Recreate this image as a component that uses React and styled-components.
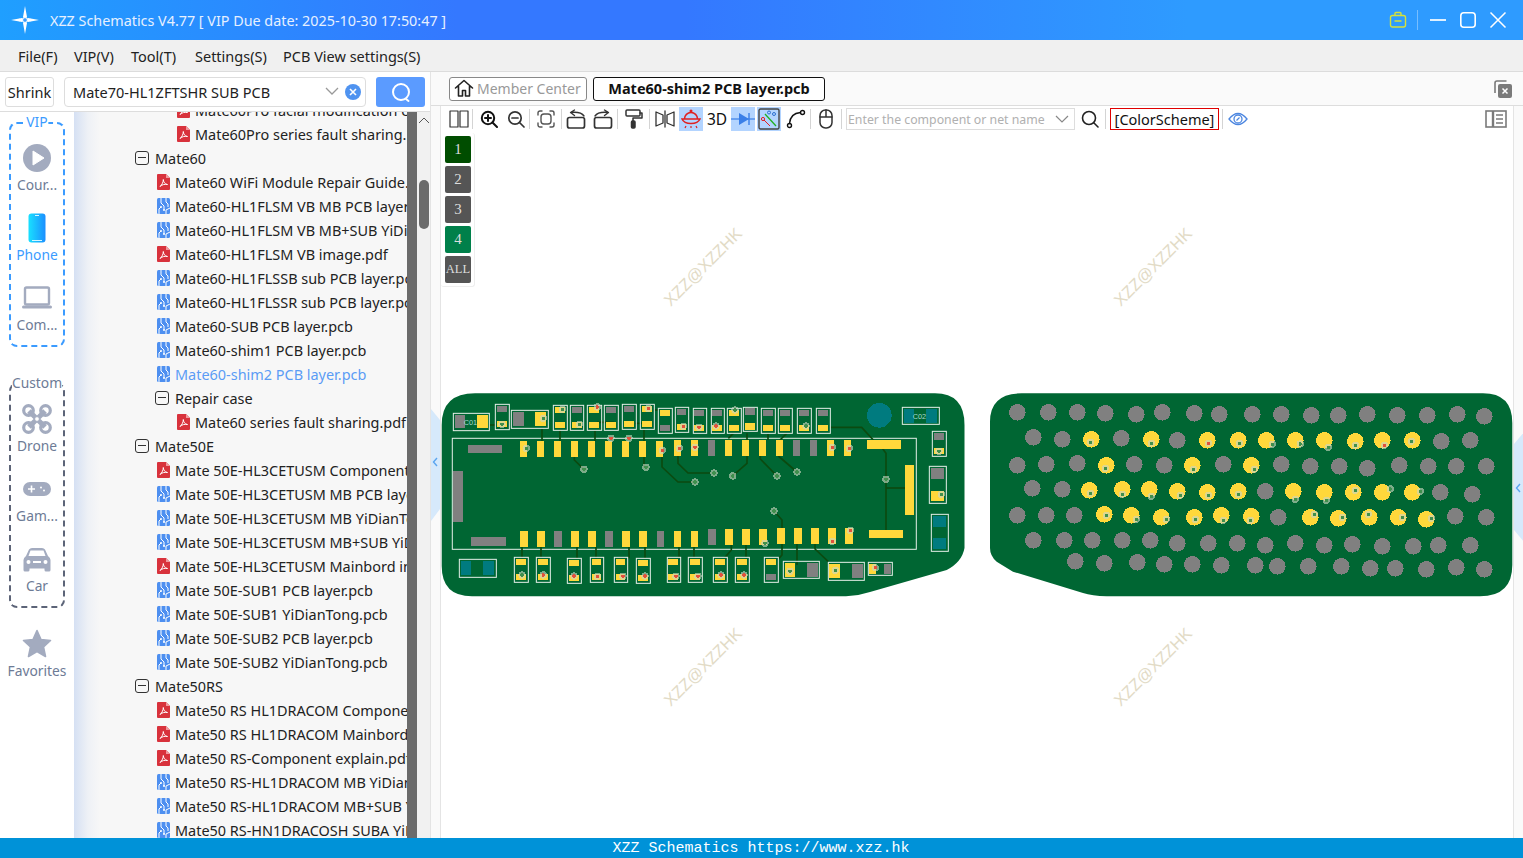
import React from 'react';
import styled, { createGlobalStyle } from 'styled-components';

const FONT = '"Noto Sans", "Open Sans", Arial, sans-serif';

const Global = createGlobalStyle`
  html, body { margin: 0; padding: 0; height: 100%; overflow: hidden; background: #fff; }
  * { box-sizing: border-box; }
  #root { height: 100%; }
`;

const Page = styled.div`
  width: 1523px; height: 858px; display: flex; flex-direction: column;
  font-family: ${FONT}; color: #222; overflow: hidden;
`;
const TitleBar = styled.header`
  height: 40px; flex: none; display: flex; align-items: center; padding: 0 10px 0 10px;
  background: linear-gradient(90deg, #1f9fff 0%, #3478ff 30%, #3478ff 45%, #2e9bff 78%, #2e9bff 100%);
`;
const LogoBox = styled.div`width: 30px; height: 30px; margin-right: 10px;`;
const TitleText = styled.div`font-size: 14.35px; color: #e6f0ff; white-space: nowrap;`;
const WinControls = styled.div`margin-left: auto; display: flex; align-items: center;`;
const WinSep = styled.div`width: 1px; height: 20px; background: rgba(255,255,255,.35); margin: 0 5px 0 10px;`;
const WinBtn = styled.div`width: 30px; height: 20px; display: flex; align-items: center; justify-content: center;`;

const MenuBar = styled.nav`
  height: 32px; flex: none; display: flex; align-items: center; gap: 16px; padding: 0 0 0 18px;
  background: #f0f0f0; border-bottom: 1px solid #dcdcdc; font-size: 14.5px; color: #222;
`;
const MenuItem = styled.span`width: ${p => p.$w}px; white-space: nowrap;`;
const Main = styled.div`flex: 1; min-height: 0; display: flex;`;

const LeftPanel = styled.aside`width: 431px; flex: none; display: flex; flex-direction: column; background: #fff; border-right: 1px solid #e4e4e4;`;
const SearchRow = styled.div`height: 40px; flex: none; display: flex; align-items: center; padding: 0 0 0 5px; border-bottom: 1px solid #ddd;`;
const ShrinkBtn = styled.div`width: 49px; height: 30px; border: 1px solid #ddd; border-radius: 3px; display: flex; align-items: center; justify-content: center; font-size: 14.5px; margin-right: 10px;`;
const SelectBox = styled.div`width: 302px; height: 30px; border: 1px solid #ddd; border-radius: 4px; display: flex; align-items: center; padding: 0 4px 0 8px; font-size: 14.5px; margin-right: 10px; color: #222;`;
const SelectText = styled.span`flex: 1;`;
const ClearDot = styled.div`width: 16px; height: 16px; margin-left: 6px; border-radius: 50%; background: #4f93f0; display: flex; align-items: center; justify-content: center;`;
const SearchBtn = styled.div`width: 49px; height: 30px; border-radius: 3px; background: #5b9bff; display: flex; align-items: center; justify-content: center;`;

const LeftBody = styled.div`flex: 1; min-height: 0; display: flex;`;
const Sidebar = styled.div`width: 74px; flex: none; padding: 10px 0 0 9px; background: #fff; display: flex; flex-direction: column;`;
const Group = styled.div`
  position: relative; width: 56px; padding: 19px 0 8px; display: flex; flex-direction: column; gap: 16px; align-items: center;
  border: 2px dashed ${p => p.$color}; border-radius: 8px; margin-bottom: ${p => p.$mb}px;
`;
const GroupLegend = styled.div`
  position: absolute; top: -12px; left: 50%; transform: translateX(-50%); background: #fff; padding: 0 ${p => p.$pad}px;
  font-size: 13.8px; line-height: 20px; color: ${p => p.$color}; white-space: nowrap;
`;
const SideItem = styled.div`display: flex; flex-direction: column; align-items: center; width: 62px; flex: none; margin-left: ${p => p.$ml || 0}px;`;
const SideIcon = styled.div`height: 30px; display: flex; align-items: center; justify-content: center;`;
const SideLabel = styled.div`font-size: 13.8px; line-height: 24px; color: ${p => p.$active ? '#3a9bff' : '#6d7b96'}; white-space: nowrap;`;

const Tree = styled.div`width: 333px; flex: none; overflow: hidden; background: linear-gradient(90deg, #d5e0f3 0, #eef1f6 14px, #f7f7f7 26px);`;
const TreeInner = styled.div`margin-top: -14px;`;
const Row = styled.div`
  height: 24px; display: flex; align-items: center; white-space: nowrap; font-size: 14.45px;
  padding-left: ${p => p.$indent}px; color: ${p => p.$hl ? '#5b9cf5' : '#222'};
`;
const FileIco = styled.span`width: 13px; height: 16px; flex: none; margin-right: 5px; display: flex;`;
const MinusBox = styled.span`
  width: 14px; height: 14px; flex: none; margin-right: 6px; border: 1.2px solid #333; border-radius: 3px; position: relative;
  &::after { content: ''; position: absolute; left: 2px; right: 2px; top: 5px; height: 1.2px; background: #333; }
`;
const DarkStrip = styled.div`width: 10px; flex: none; background: #6b6b6b;`;
const ScrollTrack = styled.div`flex: 1; background: #f1f1f1; display: flex; flex-direction: column; align-items: center; padding-top: 5px;`;
const ScrollThumb = styled.div`width: 10px; height: 49px; border-radius: 5px; background: #6b6b6b; margin-top: 56px;`;

const RightRegion = styled.div`flex: 1; min-width: 0; display: flex; flex-direction: column; background: #fafafa;`;
const TabRow = styled.div`height: 34px; flex: none; display: flex; align-items: center; padding: 0 11px 0 18px; gap: 6px; border-bottom: 1px solid #ddd;`;
const MemberTab = styled.div`height: 24px; width: 138px; border: 1px solid #888; border-radius: 3px; display: flex; align-items: center; padding: 0 0 1px 4px; gap: 3px; font-size: 14px; color: #999; background: #fff; white-space: nowrap;`;
const FileTab = styled.div`height: 24px; width: 232px; border: 1px solid #111; border-radius: 3px; display: flex; align-items: center; justify-content: center; padding-bottom: 1px; font-size: 14.5px; font-weight: 700; color: #111; background: #fff; white-space: nowrap;`;
const TabEnd = styled.div`margin-left: auto; display: flex;`;
const WorkRow = styled.div`flex: 1; min-height: 0; display: flex;`;
const Gutter = styled.div`position: relative; width: 10px; flex: none; background: #fafafa; border-right: 1px solid #e4e4e4;`;
const Handle = styled.svg`position: absolute; left: ${p => p.$left}px; top: ${p => p.$top}px;`;
const Center = styled.div`width: 1072px; flex: none; display: flex; flex-direction: column; background: #fff;`;
const ToolRow = styled.div`height: 26px; flex: none; display: flex; align-items: center; padding: 0 4px 0 5px; background: #fff;`;
const Tool = styled.div`
  width: ${p => p.$w}px; height: 24px; flex: none; display: flex; align-items: center; justify-content: center;
  margin-left: ${p => p.$ml || 0}px; background: ${p => p.$on ? '#b3d4ff' : 'transparent'}; font-size: 15.5px; color: #111;
`;
const ToolSep = styled.div`width: 1px; height: 20px; flex: none; background: #d4d4d4; margin-left: ${p => p.$ml || 0}px;`;
const NetInput = styled.div`
  width: 229px; height: 22px; flex: none; margin-left: 4px; border: 1px solid #ddd; display: flex; align-items: center; justify-content: space-between;
  padding: 0 5px 0 1px; font-size: 12.3px; color: #b0b0b0; white-space: nowrap;
`;
const SchemeBtn = styled.div`width: 109px; height: 22px; flex: none; margin-left: 4px; border: 1px solid #e00000; display: flex; align-items: center; justify-content: center; font-size: 14.5px; color: #111; white-space: nowrap;`;
const ToolEnd = styled.div`margin-left: auto;`;
const Canvas = styled.div`position: relative; flex: 1; min-height: 0; padding-top: 261px; background: #fff; overflow: hidden;`;
const Layers = styled.div`position: absolute; left: 0; top: 1px; width: 34px; padding: 3px 3px 3px 4px; display: flex; flex-direction: column; gap: 3px; border-right: 1px solid #eee; border-bottom: 1px solid #eee; border-radius: 3px; background: #fff;`;
const LayerBtn = styled.div`
  height: 27px; border-radius: 2px; background: ${p => p.$bg}; display: flex; align-items: center; justify-content: center;
  font-family: "Liberation Serif", serif; font-size: ${p => p.$fs}px; color: #ddd; overflow: hidden; white-space: nowrap;
`;
const Watermark = styled.div`
  position: absolute; left: ${p => p.$x}px; top: ${p => p.$y}px; transform: translate(-50%, -50%) rotate(-45deg);
  font-family: "Liberation Sans", sans-serif; font-size: 16.5px; color: #e2dbc6; white-space: nowrap;
`;
const Board = styled.svg`display: block;`;
const RightStrip = styled.div`position: relative; flex: 1; background: #fafafa; border-left: 1px solid #e4e4e4;`;
const StatusBar = styled.footer`
  height: 20px; flex: none; background: #0092d8; color: #fff; display: flex; align-items: center; justify-content: center;
  font-family: "Liberation Mono", monospace; font-size: 15px; padding: 1px 1px 0 0;
`;

const S = { fill: 'none', stroke: '#333', strokeWidth: 1.6, strokeLinecap: 'round', strokeLinejoin: 'round' };

const Logo = () => (
  <svg width="30" height="30" viewBox="0 0 30 30">
    <path d="M15 1 L17 12 L15 15 L13 12Z M15 29 L17 18 L15 15 L13 18Z M1 15 L12 13 L15 15 L12 17Z M29 15 L18 13 L15 15 L18 17Z" fill="#fff" />
    <circle cx="15" cy="15" r="2.4" fill="#3a9dff" stroke="#fff" strokeWidth="1" />
    <circle cx="9.5" cy="15" r="1.2" fill="#fff" /><circle cx="20.5" cy="15" r="1.2" fill="#fff" />
  </svg>
);
const Pdf = () => (
  <svg width="13" height="16" viewBox="0 0 13 16">
    <path d="M1 0 H9 L13 4 V15 a1 1 0 0 1 -1 1 H1 a1 1 0 0 1 -1 -1 V1 a1 1 0 0 1 1 -1Z" fill="#d8323c" />
    <path d="M9 0 L13 4 H9Z" fill="#f09a9f" />
    <path d="M3 12.5 C5 11 6.5 7.5 6.3 5.5 C6.2 7.5 8 10.5 10.5 10.5 C8 10 5 10.5 3 12.5Z" fill="none" stroke="#fff" strokeWidth="1" />
  </svg>
);
const Pcb = () => (
  <svg width="13" height="16" viewBox="0 0 13 16">
    <rect width="13" height="16" rx="1.5" fill="#4d8ff0" />
    <path d="M4 0 V5 L7 8 V12 M9 0 V4 L11 6 V9 M2 16 V11 L4 9 M9 16 V12 L13 10" fill="none" stroke="#fff" strokeWidth="1" />
    <circle cx="7" cy="12" r="1" fill="#fff" /><circle cx="4" cy="9" r="1" fill="#fff" />
  </svg>
);

const tree = [
  [2, 'f', 'Mate60Pro facial modification case.pdf'], [2, 'f', 'Mate60Pro series fault sharing.pdf'],
  [0, 'g', 'Mate60'],
  [1, 'f', 'Mate60 WiFi Module Repair Guide.pdf'], [1, 'p', 'Mate60-HL1FLSM VB MB PCB layer.pcb'], [1, 'p', 'Mate60-HL1FLSM VB MB+SUB YiDianTong.pcb'],
  [1, 'f', 'Mate60-HL1FLSM VB image.pdf'], [1, 'p', 'Mate60-HL1FLSSB sub PCB layer.pcb'], [1, 'p', 'Mate60-HL1FLSSR sub PCB layer.pcb'],
  [1, 'p', 'Mate60-SUB PCB layer.pcb'], [1, 'p', 'Mate60-shim1 PCB layer.pcb'], [1, 'p', 'Mate60-shim2 PCB layer.pcb', true],
  [1, 'g', 'Repair case'], [2, 'f', 'Mate60 series fault sharing.pdf'],
  [0, 'g', 'Mate50E'],
  [1, 'f', 'Mate 50E-HL3CETUSM Component explain.pdf'], [1, 'p', 'Mate 50E-HL3CETUSM MB PCB layer.pcb'], [1, 'p', 'Mate 50E-HL3CETUSM MB YiDianTong.pcb'],
  [1, 'p', 'Mate 50E-HL3CETUSM MB+SUB YiDianTong.pcb'], [1, 'f', 'Mate 50E-HL3CETUSM Mainbord image.pdf'],
  [1, 'p', 'Mate 50E-SUB1 PCB layer.pcb'], [1, 'p', 'Mate 50E-SUB1 YiDianTong.pcb'], [1, 'p', 'Mate 50E-SUB2 PCB layer.pcb'], [1, 'p', 'Mate 50E-SUB2 YiDianTong.pcb'],
  [0, 'g', 'Mate50RS'],
  [1, 'f', 'Mate50 RS HL1DRACOM Component explain.pdf'], [1, 'f', 'Mate50 RS HL1DRACOM Mainbord image.pdf'], [1, 'f', 'Mate50 RS-Component explain.pdf'],
  [1, 'p', 'Mate50 RS-HL1DRACOM MB YiDianTong.pcb'], [1, 'p', 'Mate50 RS-HL1DRACOM MB+SUB YiDianTong.pcb'], [1, 'p', 'Mate50 RS-HN1DRACOSH SUBA YiDianTong.pcb'],
  [1, 'p', 'Mate50 RS-HN1DRACOSH SUBB YiDianTong.pcb'],
];
const groupIndent = [61, 81, 103];
const fileIndent = [61, 83, 103];

const GREEN = '#006633', YEL = '#ffd83b', GRAY = '#808080', TEAL = '#007b7f', TRACE = '#0b4a10', SILK = '#e6f0ea';

const partsA = {
  outlines: [[70,85,178,137],[196,58,238,134],[244,76,355,130],[370,61,412,136],[421,61,461,136],[472,61,515,136],[523,61,565,136],[577,58,619,133],[631,58,673,133],[685,70,727,145],[736,67,776,142],[790,70,830,145],[88,523,199,577],[253,517,295,592],[319,517,361,592],[412,520,454,595],[481,517,521,592],[553,517,593,592],[619,520,661,595],[712,517,752,592],[775,517,817,592]],
  yellow: [[141,90,33,38],[201,108,30,18],[315,81,33,42],[375,66,30,18],[375,111,30,18],[426,111,30,18],[477,66,30,18],[477,111,30,18],[528,111,30,18],[582,108,30,18],[636,63,30,18],[636,108,30,18],[690,75,30,18],[741,117,28,18],[793,120,28,18],
    [270,168,21,48],[321,168,21,48],[372,168,21,48],[423,168,21,48],[474,168,21,48],[525,168,21,48],[576,168,21,48],[627,168,21,48],[678,168,21,48],[732,165,21,48],[783,165,21,48],
    [270,438,24,48],[321,438,24,48],[423,438,24,48],[474,438,24,48],[576,438,24,48],[627,438,24,48],[732,438,21,48],[783,438,21,48],
    [258,522,30,18],[258,567,30,18],[324,522,30,18],[324,567,30,18],[417,525,30,18],[417,570,30,18],[486,522,27,18],[486,567,27,18],[558,522,27,18],[558,567,27,18],[624,525,30,18],[624,570,30,18],[714,522,30,18],[714,567,30,18],[780,522,30,18],[780,567,30,18]],
  gray: [[75,90,30,40],[201,63,30,18],[249,81,33,42],[426,66,30,18],[528,66,30,18],[582,63,30,18],[690,120,30,18],[741,72,28,18],[793,75,28,18],[114,180,102,24],[69,258,30,153],[123,456,105,27],[372,438,24,48],[525,438,24,48],[681,438,21,48]],
  teal: [[93,528,30,42],[159,528,33,42]],
  vias: [[216,118],[340,100],[397,73],[448,118],[502,66,1],[655,70,1],[760,124,1],[807,127,1],[289,190],[543,160,1],[597,160,1],[697,196,1],[748,190,1],[795,187,1],[462,253],[648,247],[795,291],[276,570],[340,570,1],[432,573,1],[502,574,1],[579,574,1],[645,573,1],[738,574,1],[804,574,1]],
  traces: ['336,130 336,168','390,136 390,168','495,136 495,168','642,133 642,168','433,216 433,225 462,253','642,216 642,247','696,216 696,246 744,291 795,291','744,213 744,235 774,264 842,264','178,120 196,120','500,112 552,112','615,115 640,115','673,75 685,75','276,486 276,517','333,486 333,517','441,486 441,520','498,486 498,520','597,486 597,520','645,486 645,520','747,486 747,517','792,486 792,517'],
};
const partsB = {
  outlines: [[34,70,73,145],[82,70,124,145],[130,67,172,139],[184,70,226,145],[235,70,277,145],[292,70,334,145],[349,70,391,145],[607,67,718,118],[697,139,739,214],[688,244,739,355],[694,388,745,499],[40,517,82,592],[106,517,148,592],[193,517,235,592],[250,529,358,580],[385,532,493,586],[505,532,577,571]],
  yellow: [[36,120,30,18],[87,75,30,18],[87,120,30,18],[135,114,30,21],[189,120,30,18],[240,120,30,18],[297,120,30,18],[354,120,30,18],[702,189,30,18],[693,318,39,30],
    [75,165,21,48],[126,165,21,48],[177,165,21,48],[228,165,21,48],[381,165,21,48],[432,165,21,48],[501,165,102,26],[615,240,27,150],[507,435,102,24],
    [75,432,24,48],[126,432,24,48],[177,432,24,48],[231,429,24,48],[282,429,24,48],[333,429,24,48],[384,429,24,48],[435,429,24,48],
    [45,522,30,18],[45,567,30,18],[111,522,30,18],[111,567,30,18],[198,522,30,18],[255,534,30,42],[387,537,33,42],[507,537,21,30]],
  gray: [[36,75,30,18],[135,69,30,21],[189,75,30,18],[240,75,30,18],[297,75,30,18],[354,75,30,18],[702,144,30,21],[693,249,39,33],[24,165,21,48],[279,165,21,48],[330,165,21,48],[24,432,24,48],[198,567,30,18],[321,534,33,42],[456,537,33,42],[552,537,21,30]],
  teal: [[612,72,30,42],[678,72,33,42],[699,393,39,33],[699,459,39,33]],
  vias: [[48,123,1],[105,75],[318,123],[717,199],[724,328],[397,187,1],[448,190,1],[42,264],[98,273],[231,273],[291,261],[558,283],[222,378],[195,475],[397,469,1],[451,436,1],[63,570,1],[132,570,1],[270,559],[406,556],[526,548,1]],
  traces: ['141,145 141,165','204,145 204,165','260,145 240,165','100,145 85,160','141,213 141,235 98,273','181,213 181,222 231,273','235,213 291,261','392,127 485,127 520,165','548,191 558,205 558,435','558,309 615,309','222,378 246,405 246,432','94,480 94,495 75,517','138,480 138,517','246,477 246,510 237,520','291,477 291,540','345,477 345,492 385,530'],
};
// circles: [x, y, viaX, viaY, red]
const ballsC = [
  [112,82],[205,82],[292,82],[376,85],[469,88],[547,82],[643,85],[718,88],[817,88],
  [160,157],[247,163],[334,163,332,172],[424,160],[514,163,514,175],[592,166],[682,166,685,175,1],[775,166,778,175],
  [112,241],[199,238],[292,235],[379,241,376,250],[463,238],[553,241],[637,241,640,253],[730,238],[814,241,823,253],
  [157,310],[247,313],[328,316,331,325],[427,313,427,328],[508,313,514,334],[592,319,601,331],[682,322,685,331],[775,319,775,328],
  [112,391],[199,391],[283,391],[373,388,379,391],[454,391,469,403],[544,397,559,403],[643,397,646,403],[724,391,730,406],[814,394,811,406],
  [160,466],[253,466],[337,466],[427,466],[511,466],[592,475],[685,475],[772,475],
  [286,529],[373,535],[472,532],[553,538],[637,538],[724,541],[826,541],
];
const ballsD = [
  [94,88],[184,91],[265,91],[352,88],[442,91],[532,91],[622,88],[703,94],
  [49,166,67,178],[136,166,151,177],[223,166,235,187],[316,169,316,181],[397,166,403,181,1],[487,166,484,169],[574,169],[661,166],
  [94,238],[181,244],[268,244],[352,250],[448,241],[535,244],[619,244],[709,244],
  [46,319],[130,319,136,343],[223,322,229,346],[310,322,316,316],[397,322,421,312],[487,322,511,319],[571,322],[667,328],
  [85,397],[181,397,193,388],[265,400,277,397],[358,397,355,388],[445,397,457,397],[529,403,544,400],[616,394],[709,397],
  [46,481],[136,475],[223,481],[307,478],[397,484],[490,484],[565,481],[661,481],
  [82,544],[175,544],[274,544],[361,550],[436,550],[529,553],[619,547],[703,553],
];

const Via = ({ x, y, red }) => (
  <g shapeRendering="crispEdges">
    <circle cx={x} cy={y} r="11" fill="#c9d6c0" fillOpacity=".62" />
    <circle cx={x} cy={y} r="5.5" fill={red ? '#e2503c' : '#3f8f4d'} />
  </g>
);
const Rects = ({ list, fill }) => list.map((r, i) => <rect key={i} x={r[0]} y={r[1]} width={r[2]} height={r[3]} fill={fill} shapeRendering="crispEdges" />);
const Parts = ({ ox, data, children }) => (
  <g transform={`translate(${ox} 385) scale(0.33333)`}>
    {data.traces.map((t, i) => <polyline key={i} points={t} fill="none" stroke={TRACE} strokeWidth="5" />)}
    <Rects list={data.yellow} fill={YEL} />
    <Rects list={data.gray} fill={GRAY} />
    <Rects list={data.teal} fill={TEAL} />
    {data.outlines.map((o, i) => <rect key={i} x={o[0]} y={o[1]} width={o[2] - o[0]} height={o[3] - o[1]} fill="none" stroke={SILK} strokeWidth="3" />)}
    {children}
    {data.vias.map((v, i) => <Via key={i} x={v[0]} y={v[1]} red={v[2]} />)}
  </g>
);
const Balls = ({ ox, list }) => (
  <g transform={`translate(${ox} 385) scale(0.33333)`}>
    {list.map((b, i) => <circle key={i} cx={b[0]} cy={b[1]} r="25" fill={b[2] !== undefined ? YEL : GRAY} shapeRendering="crispEdges" />)}
    {list.filter(b => b[2] !== undefined).map((b, i) => <Via key={i} x={b[2]} y={b[3]} red={b[4]} />)}
  </g>
);

const PcbDrawing = () => (
  <Board width="1072" height="205" viewBox="441 393 1072 205">
    <path d="M475 393.3 H935 Q964.5 393.3 964.5 425 V548 Q962 562 946.7 570 L870 592 Q858 596 846 596.3 H472 Q441.7 596.3 441.7 566 V425 Q441.7 393.3 475 393.3Z" fill={GREEN} />
    <path d="M1021.7 393.3 H1483 Q1512.3 393.3 1512.3 423 V565 Q1512.3 596.3 1480 596.3 H1106.7 Q1092 596 1083 593 L1013 571.7 L996.7 561.7 Q990 556 990 548 V421.7 Q990 393.3 1021.7 393.3Z" fill={GREEN} />
    <rect x="452.3" y="438.3" width="464" height="111" fill="none" stroke={SILK} strokeWidth="1" />
    <Parts ox={430} data={partsA}>
      <text x="101" y="119" fontFamily="Liberation Sans" fontSize="22" fill="#a7d8d0">C01</text>
    </Parts>
    <Parts ox={700} data={partsB}>
      <circle cx="538" cy="91" r="37" fill={TEAL} shapeRendering="crispEdges" />
      <text x="638" y="101" fontFamily="Liberation Sans" fontSize="22" fill="#a7d8d0">C02</text>
    </Parts>
    <Balls ox={980} list={ballsC} />
    <Balls ox={1250} list={ballsD} />
  </Board>
);

const Chevron = ({ color = '#5aa5f0' }) => <path d="M6 -4 L2.5 0 L6 4" fill="none" stroke={color} strokeWidth="1.4" />;

const marks = [[262, 135], [712, 135], [262, 535], [712, 535]];

export default function App() {
  return (
    <Page>
      <Global />
      <TitleBar>
        <LogoBox><Logo /></LogoBox>
        <TitleText>XZZ Schematics V4.77 [ VIP Due date: 2025-10-30 17:50:47 ]</TitleText>
        <WinControls>
          <svg width="18" height="18" viewBox="0 0 18 18" fill="none" stroke="#d6e13a" strokeWidth="1.4">
            <rect x="1.5" y="4.5" width="15" height="11.5" rx="2" />
            <path d="M6 4.5 V2.5 a1 1 0 0 1 1 -1 h4 a1 1 0 0 1 1 1 v2 M5.5 10 h7" />
          </svg>
          <WinSep />
          <WinBtn><svg width="18" height="18" viewBox="0 0 18 18"><path d="M1 9 H17" stroke="#fff" strokeWidth="1.7" /></svg></WinBtn>
          <WinBtn><svg width="18" height="18" viewBox="0 0 18 18"><rect x="1.8" y="1.8" width="14.4" height="14.4" rx="3" fill="none" stroke="#fff" strokeWidth="1.6" /></svg></WinBtn>
          <WinBtn><svg width="18" height="18" viewBox="0 0 18 18"><path d="M1.5 1.5 L16.5 16.5 M16.5 1.5 L1.5 16.5" stroke="#fff" strokeWidth="1.5" /></svg></WinBtn>
        </WinControls>
      </TitleBar>
      <MenuBar>
        <MenuItem $w={40}>File(F)</MenuItem>
        <MenuItem $w={41}>VIP(V)</MenuItem>
        <MenuItem $w={48}>Tool(T)</MenuItem>
        <MenuItem $w={72}>Settings(S)</MenuItem>
        <MenuItem $w={137}>PCB View settings(S)</MenuItem>
      </MenuBar>
      <Main>
        <LeftPanel>
          <SearchRow>
            <ShrinkBtn>Shrink</ShrinkBtn>
            <SelectBox>
              <SelectText>Mate70-HL1ZFTSHR SUB PCB</SelectText>
              <svg width="14" height="9" viewBox="0 0 14 9"><path d="M1 1 L7 7 L13 1" fill="none" stroke="#999" strokeWidth="1.3" /></svg>
              <ClearDot><svg width="8" height="8" viewBox="0 0 8 8"><path d="M1 1 L7 7 M7 1 L1 7" stroke="#fff" strokeWidth="1.6" /></svg></ClearDot>
            </SelectBox>
            <SearchBtn>
              <svg width="22" height="22" viewBox="0 0 22 22" fill="none" stroke="#fff" strokeWidth="2"><circle cx="11" cy="11" r="8" /><path d="M16 18 L18.5 20" strokeLinecap="round" /></svg>
            </SearchBtn>
          </SearchRow>
          <LeftBody>
            <Sidebar>
              <Group $color="#3b9bff" $mb={36}>
                <GroupLegend $color="#3b9bff" $pad={1}>VIP</GroupLegend>
                <SideItem>
                  <SideIcon><svg width="30" height="30" viewBox="0 0 30 30"><circle cx="15" cy="15" r="14" fill="#a3abbf" /><path d="M11 8 L22 15 L11 22Z" fill="#fff" strokeLinejoin="round" stroke="#fff" /></svg></SideIcon>
                  <SideLabel>Cour...</SideLabel>
                </SideItem>
                <SideItem>
                  <SideIcon>
                    <svg width="18" height="30" viewBox="0 0 18 30">
                      <defs><linearGradient id="phoneG" x1="0" x2="1" y1="0" y2="0"><stop offset="0" stopColor="#19e0ff" /><stop offset="1" stopColor="#1b8fff" /></linearGradient></defs>
                      <rect x="0.5" y="0.5" width="17" height="29" rx="3" fill="url(#phoneG)" />
                      <path d="M7 2.5 H11 M4 27.5 H14" stroke="#d8f7ff" strokeWidth="1" />
                    </svg>
                  </SideIcon>
                  <SideLabel $active>Phone</SideLabel>
                </SideItem>
                <SideItem>
                  <SideIcon>
                    <svg width="32" height="24" viewBox="0 0 32 24">
                      <rect x="4" y="1.5" width="24" height="17" rx="1.5" fill="#fff" stroke="#a3abbf" strokeWidth="2.4" />
                      <rect x="1" y="19.5" width="30" height="3" rx="1.5" fill="#a3abbf" />
                    </svg>
                  </SideIcon>
                  <SideLabel>Com...</SideLabel>
                </SideItem>
              </Group>
              <Group $color="#5c6478" $mb={21}>
                <GroupLegend $color="#6d7b96" $pad={0}>Custom</GroupLegend>
                <SideItem>
                  <SideIcon>
                    <svg width="30" height="30" viewBox="0 0 30 30" fill="none" stroke="#a3abbf">
                      <path d="M7 7 L23 23 M23 7 L7 23" strokeWidth="5" />
                      <circle cx="6.5" cy="6.5" r="4.8" strokeWidth="3.2" /><circle cx="23.5" cy="6.5" r="4.8" strokeWidth="3.2" />
                      <circle cx="6.5" cy="23.5" r="4.8" strokeWidth="3.2" /><circle cx="23.5" cy="23.5" r="4.8" strokeWidth="3.2" />
                      <circle cx="15" cy="15" r="2.4" fill="#fff" stroke="#a3abbf" strokeWidth="1" />
                    </svg>
                  </SideIcon>
                  <SideLabel>Drone</SideLabel>
                </SideItem>
                <SideItem>
                  <SideIcon>
                    <svg width="28" height="14" viewBox="0 0 28 14">
                      <rect width="28" height="14" rx="7" fill="#a3abbf" />
                      <path d="M5 7 H12 M8.5 3.5 V10.5" stroke="#fff" strokeWidth="1.6" />
                      <circle cx="18" cy="5.5" r="1" fill="#fff" /><circle cx="21" cy="8.5" r="1" fill="#fff" />
                    </svg>
                  </SideIcon>
                  <SideLabel>Gam...</SideLabel>
                </SideItem>
                <SideItem>
                  <SideIcon>
                    <svg width="28" height="25" viewBox="0 0 28 25">
                      <path d="M6 2.5 Q7 1 9 1 H19 Q21 1 22 2.5 L25 9 Q27.5 11 27.5 13 V23 Q27.5 24.5 26 24.5 H23 Q21.5 24.5 21.5 23 V21.5 H6.5 V23 Q6.5 24.5 5 24.5 H2 Q0.5 24.5 0.5 23 V13 Q0.5 11 3 9Z" fill="#a3abbf" />
                      <path d="M7.5 3.5 H20.5 L22.5 9 H5.5Z" fill="#fff" />
                      <circle cx="5.5" cy="15" r="2" fill="#fff" /><circle cx="22.5" cy="15" r="2" fill="#fff" />
                      <rect x="10" y="14" width="8" height="2" fill="#fff" />
                    </svg>
                  </SideIcon>
                  <SideLabel>Car</SideLabel>
                </SideItem>
              </Group>
              <SideItem $ml={-3}>
                <SideIcon>
                  <svg width="30" height="30" viewBox="0 0 30 30"><path d="M15 1.5 L19 10.5 L28.5 11.5 L21.5 18 L23.5 27.5 L15 22.5 L6.5 27.5 L8.5 18 L1.5 11.5 L11 10.5Z" fill="#a3abbf" stroke="#a3abbf" strokeWidth="1.6" strokeLinejoin="round" /></svg>
                </SideIcon>
                <SideLabel>Favorites</SideLabel>
              </SideItem>
            </Sidebar>
            <Tree>
              <TreeInner>
                {tree.map(([lvl, kind, text, hl], i) => (
                  <Row key={i} $indent={kind === 'g' ? groupIndent[lvl] : fileIndent[lvl]} $hl={hl}>
                    {kind === 'g' ? <MinusBox /> : <FileIco>{kind === 'f' ? <Pdf /> : <Pcb />}</FileIco>}
                    {text}
                  </Row>
                ))}
              </TreeInner>
            </Tree>
            <DarkStrip />
            <ScrollTrack>
              <svg width="12" height="7" viewBox="0 0 12 7"><path d="M1 6 L6 1 L11 6" fill="none" stroke="#555" strokeWidth="1" /></svg>
              <ScrollThumb />
            </ScrollTrack>
          </LeftBody>
        </LeftPanel>
        <RightRegion>
          <TabRow>
            <MemberTab>
              <svg width="20" height="20" viewBox="0 0 20 20" {...S} stroke="#222"><path d="M1.5 10 L10 2.5 L18.5 10 M4.5 8.5 V18 H8.5 V12.5 H11.5 V18 H15.5 V8.5" /></svg>
              Member Center
            </MemberTab>
            <FileTab>Mate60-shim2 PCB layer.pcb</FileTab>
            <TabEnd>
              <svg width="18" height="18" viewBox="0 0 18 18">
                <path d="M12.5 1 H3 a2 2 0 0 0 -2 2 V13" fill="none" stroke="#7a7a7a" strokeWidth="1.6" />
                <rect x="4" y="4" width="14" height="14" rx="2" fill="#7a7a7a" />
                <path d="M8.5 8.5 L13.5 13.5 M13.5 8.5 L8.5 13.5" stroke="#fff" strokeWidth="1.5" />
              </svg>
            </TabEnd>
          </TabRow>
          <WorkRow>
            <Gutter>
              <Handle $left={0} $top={303} width="9" height="112" viewBox="0 0 9 112">
                <path d="M0 0 L9 11 V100 L0 112Z" fill="#d6e9fb" />
                <g transform="translate(0 53)"><Chevron /></g>
              </Handle>
            </Gutter>
            <Center>
              <ToolRow>
                <Tool $w={26}><svg width="20" height="18" viewBox="0 0 20 18" {...S} strokeWidth="1.2"><rect x="1" y="1" width="8" height="16" /><rect x="11" y="1" width="8" height="16" /></svg></Tool>
                <ToolSep />
                <Tool $w={29} $ml={1}><svg width="18" height="18" viewBox="0 0 18 18" {...S} stroke="#111" strokeWidth="2"><circle cx="8" cy="8" r="6.2" /><path d="M12.5 12.5 L17 17 M5 8 H11 M8 5 V11" /></svg></Tool>
                <Tool $w={26}><svg width="18" height="18" viewBox="0 0 18 18" {...S} strokeWidth="1.7"><circle cx="8" cy="8" r="6.2" /><path d="M12.5 12.5 L17 17 M5 8 H11" /></svg></Tool>
                <ToolSep />
                <Tool $w={31}><svg width="18" height="18" viewBox="0 0 18 18" {...S} stroke="#555" strokeWidth="1.4"><path d="M1 5 V3 a2 2 0 0 1 2 -2 H5 M13 1 h2 a2 2 0 0 1 2 2 V5 M17 13 v2 a2 2 0 0 1 -2 2 H13 M5 17 H3 a2 2 0 0 1 -2 -2 V13" /><rect x="4" y="4" width="10" height="10" rx="3" /></svg></Tool>
                <ToolSep />
                <Tool $w={27}><svg width="20" height="20" viewBox="0 0 20 20" {...S} strokeWidth="1.7"><rect x="1.5" y="8.5" width="17" height="10.5" rx="2" /><path d="M18 7 Q15 2.5 5 3.5 M8.5 1 L4.5 3.5 L8.5 6.5" strokeWidth="1.4" /></svg></Tool>
                <Tool $w={28}><svg width="20" height="20" viewBox="0 0 20 20" {...S} strokeWidth="1.7"><rect x="1.5" y="8.5" width="17" height="10.5" rx="2" /><path d="M2 7 Q5 2.5 15 3.5 M11.5 1 L15.5 3.5 L11.5 6.5" strokeWidth="1.4" /></svg></Tool>
                <ToolSep />
                <Tool $w={31}><svg width="18" height="20" viewBox="0 0 18 20" {...S} strokeWidth="1.5"><rect x="1" y="1" width="14" height="6" rx="1" /><path d="M15 4 H17 V9 H8 V12" /><rect x="6.5" y="12" width="3.5" height="7" rx="1" fill="#333" /></svg></Tool>
                <ToolSep />
                <Tool $w={29}><svg width="20" height="18" viewBox="0 0 20 18" {...S} strokeWidth="1.3"><path d="M1 2 L8 5 V13 L1 16Z M19 2 L12 5 V13 L19 16Z M10 1 V17" /></svg></Tool>
                <Tool $w={24} $on><svg width="20" height="20" viewBox="0 0 20 20" fill="none" stroke="#e02020" strokeWidth="1.5"><path d="M3.5 10 a6.5 6.5 0 0 1 13 0" /><path d="M1 10 H19 Q17 14.5 10 14.5 Q3 14.5 1 10Z" /><circle cx="10" cy="2" r=".8" /><path d="M5 17 L4 19 M10 17 V19 M15 17 L16 19" strokeWidth="1.2" /></svg></Tool>
                <Tool $w={28}>3D</Tool>
                <Tool $w={24} $on><svg width="24" height="16" viewBox="0 0 24 16"><path d="M0 8 H24" stroke="#3a7fe8" strokeWidth="1.2" /><path d="M8 2 L18 8 L8 14Z" fill="#3a7fe8" /><path d="M18 2 V14" stroke="#3a7fe8" strokeWidth="1.4" /></svg></Tool>
                <Tool $w={24} $ml={2} $on>
                  <svg width="22" height="22" viewBox="0 0 22 22" fill="none">
                    <rect x="1" y="1" width="20" height="20" rx="1.5" stroke="#444" strokeWidth="1.4" />
                    <circle cx="5" cy="11" r="1.6" stroke="#e02020" /><path d="M6 12 L12 18" stroke="#e02020" />
                    <circle cx="11" cy="4.5" r="1.5" stroke="#2d6fd0" /><circle cx="16" cy="6" r="1.5" stroke="#2d6fd0" />
                    <path d="M7 6 L18 18" stroke="#22b022" strokeWidth="1.3" />
                  </svg>
                </Tool>
                <Tool $w={29}><svg width="20" height="20" viewBox="0 0 20 20" {...S} stroke="#111" strokeWidth="1.4"><circle cx="3.5" cy="16.5" r="2" /><circle cx="16.5" cy="3.5" r="2" /><path d="M3.5 14.5 C4 8 8 4 14.5 3.5" /></svg></Tool>
                <ToolSep />
                <Tool $w={30}><svg width="14" height="20" viewBox="0 0 14 20" {...S} strokeWidth="1.5"><rect x="1" y="1" width="12" height="18" rx="5.5" /><path d="M1 8 H13 M7 1 V8" /></svg></Tool>
                <ToolSep />
                <NetInput>
                  Enter the component or net name
                  <svg width="14" height="9" viewBox="0 0 14 9"><path d="M1 1 L7 7 L13 1" fill="none" stroke="#888" strokeWidth="1.2" /></svg>
                </NetInput>
                <Tool $w={30}><svg width="18" height="18" viewBox="0 0 18 18" {...S} stroke="#222"><circle cx="8" cy="8" r="6.5" /><path d="M13 13 L17 17" /></svg></Tool>
                <ToolSep />
                <SchemeBtn>[ColorScheme]</SchemeBtn>
                <ToolSep $ml={3} />
                <Tool $w={30}><svg width="20" height="14" viewBox="0 0 20 14" fill="none" stroke="#4c86e0" strokeWidth="1.3"><path d="M1 7 Q10 -4 19 7 Q10 18 1 7Z" /><circle cx="10" cy="7" r="4" /><path d="M8.5 8.5 L11.5 5.5" /></svg></Tool>
                <ToolEnd>
                  <Tool $w={26}><svg width="22" height="18" viewBox="0 0 22 18" fill="none" stroke="#7a7a7a"><rect x="1" y="1" width="20" height="16" strokeWidth="1.6" /><path d="M8 1 V17" strokeWidth="2.4" /><path d="M11 5 H18 M11 9 H18 M11 13 H18" strokeWidth="1.3" /></svg></Tool>
                </ToolEnd>
              </ToolRow>
              <Canvas>
                <Layers>
                  <LayerBtn $bg="#004d00" $fs={15}>1</LayerBtn>
                  <LayerBtn $bg="#555" $fs={15}>2</LayerBtn>
                  <LayerBtn $bg="#555" $fs={15}>3</LayerBtn>
                  <LayerBtn $bg="#00804a" $fs={15}>4</LayerBtn>
                  <LayerBtn $bg="#555" $fs={12.5}>ALL</LayerBtn>
                </Layers>
                <PcbDrawing />
                {marks.map(([x, y], i) => <Watermark key={i} $x={x} $y={y}>XZZ@XZZHK</Watermark>)}
              </Canvas>
            </Center>
            <RightStrip>
              <Handle $left={0} $top={326} width="10" height="110" viewBox="0 0 10 110">
                <path d="M10 0 L0 12 V98 L10 110Z" fill="#d6e9fb" />
                <g transform="translate(0 56)"><Chevron /></g>
              </Handle>
            </RightStrip>
          </WorkRow>
        </RightRegion>
      </Main>
      <StatusBar>XZZ Schematics https://www.xzz.hk</StatusBar>
    </Page>
  );
}
